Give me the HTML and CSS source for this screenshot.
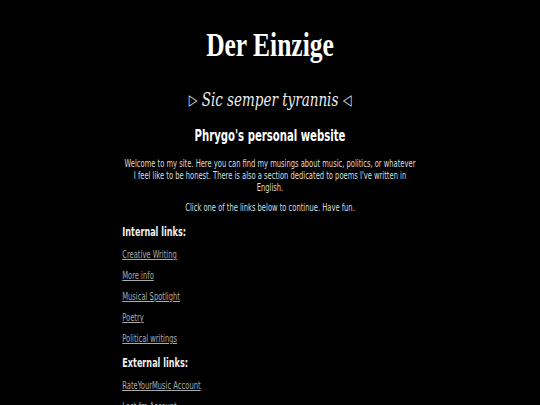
FILE: index.html
```html
<!DOCTYPE html>
<html>
<head>
<meta charset="utf-8">
<link rel="stylesheet" href="styles.css">
</head>
<body>
<div class="stage">
<div class="page">
  <h1 class="title">Der Einzige</h1>
  <h2 class="motto"><span class="tri">&#9655;</span> Sic semper tyrannis <span class="tri">&#9665;</span></h2>
  <h3 class="subtitle">Phrygo's personal website</h3>
  <p class="intro">Welcome to my site. Here you can find my musings about music, politics, or whatever I feel like to be honest. There is also a section dedicated to poems I've written in English.</p>
  <p class="intro second">Click one of the links below to continue. Have fun.</p>
  <h4 class="section">Internal links:</h4>
  <ul class="links">
    <li><a href="#">Creative Writing</a></li>
    <li><a href="#">More info</a></li>
    <li><a href="#">Musical Spotlight</a></li>
    <li><a href="#">Poetry</a></li>
    <li><a href="#">Political writings</a></li>
  </ul>
  <h4 class="section">External links:</h4>
  <ul class="links">
    <li><a href="#">RateYourMusic Account</a></li>
    <li><a href="#">Last.fm Account</a></li>
  </ul>
</div>
</div>
</body>
</html>
```
FILE: styles.css
```css
html, body {
  margin: 0;
  padding: 0;
  background: #000;
  overflow: hidden;
}
body {
  color: #ddd;
  font-family: "DejaVu Sans Condensed", "DejaVu Sans", sans-serif;
  height: 405px;
}
.stage {
  width: 540px;
  transform: scaleX(0.75);
  transform-origin: 270px 0;
}
.page {
  width: 394px;
  margin: 0 auto;
  padding-top: 24px;
}
.title {
  font-family: "Liberation Serif", serif;
  font-size: 34px;
  font-weight: bold;
  color: #fff;
  text-align: center;
  margin: 0;
  line-height: 42px;
}
.motto {
  font-family: "DejaVu Serif", serif;
  font-style: italic;
  font-weight: normal;
  font-size: 18px;
  color: #eee;
  text-align: center;
  margin: 21px 0 0;
  line-height: 26px;
}
.tri {
  font-style: normal;
  font-size: 15px;
  vertical-align: 1px;
}
.subtitle {
  font-size: 15px;
  font-weight: bold;
  color: #fff;
  text-align: center;
  margin: 13px 0 0;
  line-height: 20px;
}
.intro {
  font-size: 10px;
  line-height: 12px;
  text-align: center;
  margin: 12px 0 0;
  padding: 0 2px;
}
.intro.second {
  margin-top: 8px;
}
.section {
  font-size: 12px;
  font-weight: bold;
  color: #eee;
  margin: 10px 0 4px;
  line-height: 16px;
}
.links {
  list-style: none;
  padding: 0;
  margin: 0;
}
.links li {
  font-size: 10px;
  line-height: 12px;
  margin-top: 9px;
}
.links a {
  color: #aaa;
  text-decoration: underline;
}
```
